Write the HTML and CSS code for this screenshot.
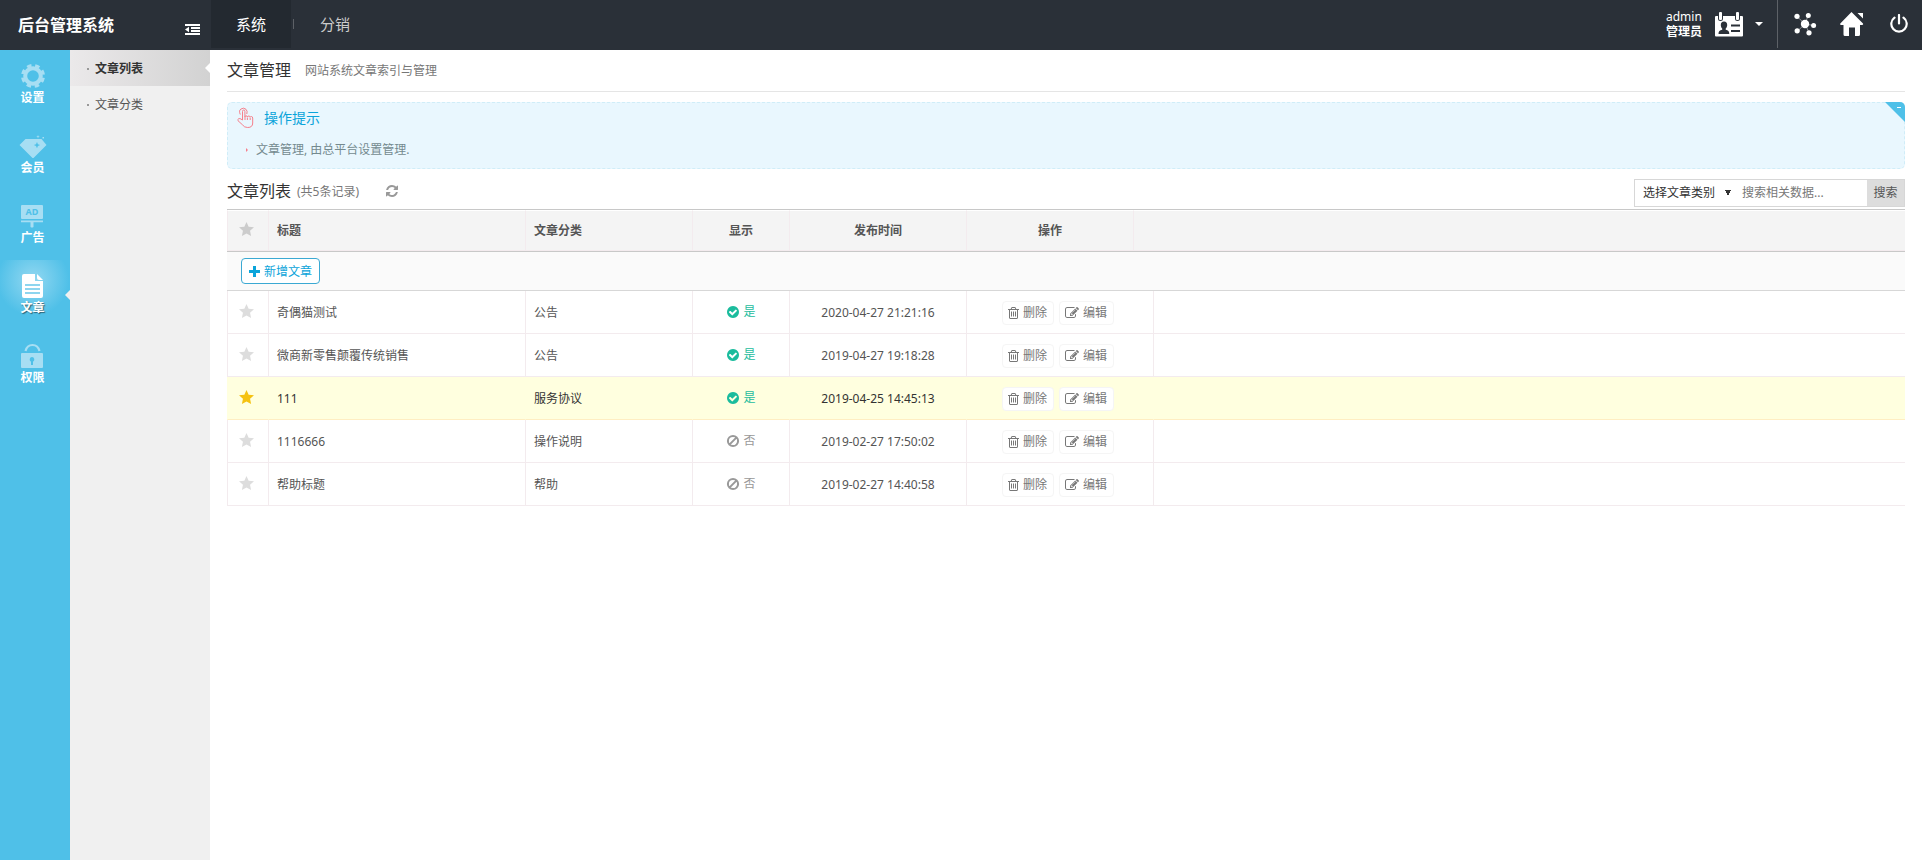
FILE: index.html
```html
<!DOCTYPE html>
<html lang="zh-CN">

<head>
	<meta charset="UTF-8">
	<meta name="viewport" content="width=device-width, initial-scale=1.0">
	<title>后台管理系统</title>

	<link rel="stylesheet" href="styles.css">
</head>

<body>

	<!-- 图标 -->
	<svg class="icon-defs" aria-hidden="true">
		<symbol id="i-star" viewBox="0 0 14 13">
			<path d="M7 0l2 4.300 5 .6-3.700 3.200 1 4.900L7 10.700 2.700 13l1-4.900L0 4.900l5-.6z" />
		</symbol>
		<symbol id="i-trash" viewBox="192 0 1408 1792">
			<path d="M704 736v576q0 14-9 23t-23 9h-64q-14 0-23-9t-9-23v-576q0-14 9-23t23-9h64q14 0 23 9t9 23zm256 0v576q0 14-9 23t-23 9h-64q-14 0-23-9t-9-23v-576q0-14 9-23t23-9h64q14 0 23 9t9 23zm256 0v576q0 14-9 23t-23 9h-64q-14 0-23-9t-9-23v-576q0-14 9-23t23-9h64q14 0 23 9t9 23zm128 724v-948h-896v948q0 22 7 40.500t14.500 27 10.500 8.500h832q3 0 10.500-8.500t14.500-27 7-40.500zm-672-1076h448l-48-117q-7-9-17-11h-317q-10 2-17 11zm928 32v64q0 14-9 23t-23 9h-96v948q0 83-47 143.500t-113 60.500h-832q-66 0-113-58.500t-47-141.500v-952h-96q-14 0-23-9t-9-23v-64q0-14 9-23t23-9h309l70-167q15-37 54-63t79-26h320q40 0 79 26t54 63l70 167h309q14 0 23 9t9 23z" />
		</symbol>
		<symbol id="i-edit" viewBox="0 0 1792 1792">
			<path d="M888 1184l116-116-152-152-116 116v56h96v96h56zm440-720q-16-16-33 1l-350 350q-17 17-1 33t33-1l350-350q17-17 1-33zm80 594v190q0 119-84.500 203.500t-203.500 84.500h-832q-119 0-203.500-84.500t-84.500-203.500v-832q0-119 84.500-203.500t203.500-84.500h832q63 0 117 25 15 7 18 23 3 17-9 29l-49 49q-14 14-32 8-23-6-45-6h-832q-66 0-113 47t-47 113v832q0 66 47 113t113 47h832q66 0 113-47t47-113v-126q0-13 9-22l64-64q15-15 35-7t20 29zm-96-738l288 288-672 672h-288v-288zm444 132l-92 92-288-288 92-92q28-28 68-28t68 28l152 152q28 28 28 68t-28 68z" />
		</symbol>
		<symbol id="i-yes" viewBox="0 0 1792 1792">
			<path d="M1412 734q0-28-18-46l-91-90q-19-19-45-19t-45 19l-408 407-226-226q-19-19-45-19t-45 19l-91 90q-18 18-18 46 0 27 18 45l362 362q19 19 45 19 27 0 46-19l543-543q18-18 18-45zm252 162q0 209-103 385.500t-279.500 279.500-385.500 103-385.500-103-279.500-279.500-103-385.500 103-385.500 279.500-279.500 385.500-103 385.500 103 279.500 279.500 103 385.500z" />
		</symbol>
		<symbol id="i-no" viewBox="0 0 14 14">
			<path d="M7 1.900a5.100 5.100 0 100 10.200A5.100 5.100 0 007 1.900zM10.600 3.400l-7.200 7.200" fill="none" stroke="currentColor" stroke-width="2" />
		</symbol>
	</svg>

	<header class="header">
		<div class="logo">
			<h1>后台管理系统</h1>
			<button type="button" class="fold" aria-label="收起菜单">
				<svg width="15" height="12" viewBox="0 0 15 12">
					<path d="M0 0h15v2H0zM6 3h9v2H6zM6 6h9v2H6zM0 9h15v2H0zM0 5.500L4 2.800v5.400z" />
				</svg>
			</button>
		</div>
		<nav class="tabs">
			<a href="#" class="tab on">系统</a>
			<a href="#" class="tab">分销</a>
		</nav>
		<div class="account">
			<div class="account-name">
				<span>admin</span>
				<strong>管理员</strong>
			</div>
			<svg width="28" height="25" viewBox="0 0 28 25">
				<path fill="#fff" d="M1 4h2v2.500a2.500 2.500 0 005 0V4h12v2.500a2.500 2.500 0 005 0V4h2q1 0 1 1v18.500q0 1-1 1H1q-1 0-1-1V5q0-1 1-1z" />
				<rect x="4" y="0" width="3" height="8" rx="1" fill="#fff" />
				<rect x="21" y="0" width="3" height="8" rx="1" fill="#fff" />
				<path fill="#2a3038" d="M9 9.500c2.200 0 3.200 1.500 3.200 3.500 0 1.600-.7 2.800-1.500 3.500v1.200c2.500.6 3.600 1.500 3.600 4.300H3.500c0-2.800 1.100-3.700 3.700-4.300v-1.200C6.400 15.800 5.800 14.600 5.800 13c0-2 1-3.500 3.200-3.500zM16 12.500h9v2h-9zM16 18h9v2h-9z" />
			</svg>
			<span class="caret"></span>
		</div>
		<div class="tools">
			<button type="button" class="tool" aria-label="站点地图">
				<svg width="24" height="24" viewBox="0 0 24 24">
					<path d="M12 12L4 4.500M12 12l3-8M12 12l8.500 1.500M12 12l4 8.500M12 12l-7.500 7" stroke="#8d9196" />
					<circle cx="12" cy="12" r="4.200" />
					<circle cx="4" cy="4.300" r="2.600" />
					<circle cx="15.300" cy="3.600" r="2.500" />
					<circle cx="20.600" cy="13.500" r="2.500" />
					<circle cx="16" cy="20.800" r="2.600" />
					<circle cx="4.200" cy="18.800" r="2.600" />
				</svg>
			</button>
			<button type="button" class="tool" aria-label="首页">
				<svg width="24" height="24" viewBox="0 0 24 24">
					<path d="M11.500 0L23 11.500q.6 1.500-1 1.500h-2v9.500q0 1.500-1.500 1.500H15v-8.500H9V24H5q-1.500 0-1.500-1.500V13H1.200Q-.4 13 .3 11.500zM17.500 1H23v5.500z" />
				</svg>
			</button>
			<button type="button" class="tool" aria-label="退出">
				<svg width="20" height="20" viewBox="0 0 20 20">
					<path d="M5.500 3.600a7.700 7.700 0 109 0M10 1v8.500" fill="none" stroke="#fff" stroke-width="2.200" stroke-linecap="round" />
				</svg>
			</button>
		</div>
	</header>

	<div class="wrap">

		<nav class="side">
			<a href="#" class="side-item">
				<svg width="28" height="26" viewBox="0 0 28 26">
					<circle cx="14" cy="13" r="7.800" fill="none" stroke="#a7def3" stroke-width="4" />
					<circle cx="14" cy="13" r="10.500" fill="none" stroke="#a7def3" stroke-width="3" stroke-dasharray="4.500 3.747" stroke-dashoffset="-1.870" />
				</svg>
				<span>设置</span>
			</a>
			<a href="#" class="side-item">
				<svg width="28" height="26" viewBox="0 0 28 26">
					<path fill-rule="evenodd" d="M6.500 6h16l5 6L14.500 25h-1L.5 12zM18 9l-1 2.200-2.200.9 2.200.9 1 2.200.9-2.200 2.200-.9-2.200-.9z" />
					<path d="M19 2l.5 1.200 1.300.4-1.300.5L19 5.500l-.5-1.400-1.300-.5 1.300-.4zM23.500 4h1.500v1.500h-1.500z" />
				</svg>
				<span>会员</span>
			</a>
			<a href="#" class="side-item">
				<svg width="28" height="26" viewBox="0 0 28 26">
					<rect x="2" y="2" width="22" height="14" rx="1" />
					<path d="M2 17.500h22v1.800H2zM11.500 19h3v5q-1.500 1-3 0z" />
					<text x="13" y="12" class="ad">AD</text>
				</svg>
				<span>广告</span>
			</a>
			<a href="#" class="side-item on">
				<svg width="28" height="26" viewBox="0 0 28 26">
					<path d="M5 1h11v7h8v15q0 2-2 2H5q-2 0-2-2V3q0-2 2-2z" />
					<path d="M18 1l6 6h-4q-2 0-2-2z" />
					<path d="M6 12h15M6 16h15M6 20h15" stroke="#8dd5ef" stroke-width="2" />
				</svg>
				<span>文章</span>
			</a>
			<a href="#" class="side-item">
				<svg width="28" height="26" viewBox="0 0 28 26">
					<path d="M6.500 8q1.500-6 7-6t7 6" fill="none" stroke="#a7def3" stroke-width="2.200" />
					<path fill-rule="evenodd" d="M3 10h20q1 0 1 1v13q0 1-1 1H3q-1 0-1-1V11q0-1 1-1zM13 14a2.500 2.500 0 00-1 4.700V22h2v-3.300A2.500 2.500 0 0013 14z" />
				</svg>
				<span>权限</span>
			</a>
		</nav>

		<nav class="submenu">
			<a href="#" class="submenu-item on">文章列表</a>
			<a href="#" class="submenu-item">文章分类</a>
		</nav>

		<main class="main">

			<div class="page-title">
				<h2>文章管理</h2>
				<p>网站系统文章索引与管理</p>
			</div>

			<section class="tips">
				<h3>
					<svg width="20" height="22" viewBox="0 0 20 22">
						<path d="M6.500 13V4.500q0-1.500 1.200-1.500t1.200 1.500V10q0-1.200 1.200-1.200t1.300 1.200q.2-1 1.400-1t1.300 1.300q.2-.8 1.300-.8t1.300 1.500v5q0 4.500-5 4.500-3.500 0-5-2.500L2 13.700q-.6-1.500.7-2t2.300.4zM4.300 7.500Q2.500 3.500 5 2q2.700-1.800 5 .3 1.800 1.900.8 4.700M9 10v3M11.400 10.500V13M14.200 11v2" />
					</svg>
					操作提示
				</h3>
				<ul>
					<li>文章管理, 由总平台设置管理.</li>
				</ul>
				<button type="button" class="tips-close" aria-label="收起提示"></button>
			</section>

			<div class="list-head">
				<h3>文章列表</h3>
				<span class="count">(共5条记录)</span>
				<button type="button" class="refresh" aria-label="刷新">
					<svg width="14" height="14" viewBox="0 0 1792 1792">
						<path d="M1639 1056q0 5-1 7-64 268-268 434.500t-478 166.500q-146 0-282.500-55t-243.500-157l-129 129q-19 19-45 19t-45-19-19-45v-448q0-26 19-45t45-19h448q26 0 45 19t19 45-19 45l-137 137q71 66 161 102t187 36q134 0 250-65t186-179q11-17 53-117 8-23 30-23h192q13 0 22.500 9.500t9.500 22.500zm25-800v448q0 26-19 45t-45 19h-448q-26 0-45-19t-19-45 19-45l138-138q-148-137-349-137-134 0-250 65t-186 179q-11 17-53 117-8 23-30 23h-199q-13 0-22.500-9.500t-9.500-22.500v-7q65-268 270-434.500t480-166.500q146 0 284 55.500t245 156.500l130-129q19-19 45-19t45 19 19 45z" />
					</svg>
				</button>
				<form class="search">
					<select aria-label="选择文章类别">
						<option>选择文章类别</option>
						<option>公告</option>
						<option>服务协议</option>
						<option>操作说明</option>
						<option>帮助</option>
					</select>
					<input type="text" placeholder="搜索相关数据..." aria-label="搜索相关数据">
					<button type="button">搜索</button>
				</form>
			</div>

			<table class="list">
				<colgroup>
					<col class="col-star">
					<col class="col-title">
					<col class="col-cate">
					<col class="col-show">
					<col class="col-time">
					<col class="col-handle">
					<col class="col-handle-more">
					<col>
				</colgroup>
				<thead>
					<tr>
						<th><svg class="star"><use href="#i-star" /></svg></th>
						<th>标题</th>
						<th>文章分类</th>
						<th class="center">显示</th>
						<th class="center">发布时间</th>
						<th class="center">操作</th>
						<th colspan="2"></th>
					</tr>
				</thead>
				<tbody>
					<tr class="toolbar">
						<td colspan="8">
							<button type="button" class="add">
								<svg width="11" height="11" viewBox="0 0 11 11"><path d="M4 0h3v4h4v3H7v4H4V7H0V4h4z" /></svg>
								新增文章
							</button>
						</td>
					</tr>
					<tr>
						<td><svg class="star"><use href="#i-star" /></svg></td>
						<td>奇偶猫测试</td>
						<td>公告</td>
						<td class="center"><span class="state yes"><svg><use href="#i-yes" /></svg>是</span></td>
						<td class="center">2020-04-27 21:21:16</td>
						<td class="handle" colspan="2">
							<a href="#" class="btn"><svg class="trash"><use href="#i-trash" /></svg>删除</a>
							<a href="#" class="btn"><svg><use href="#i-edit" /></svg>编辑</a>
						</td>
						<td></td>
					</tr>
					<tr>
						<td><svg class="star"><use href="#i-star" /></svg></td>
						<td>微商新零售颠覆传统销售</td>
						<td>公告</td>
						<td class="center"><span class="state yes"><svg><use href="#i-yes" /></svg>是</span></td>
						<td class="center">2019-04-27 19:18:28</td>
						<td class="handle" colspan="2">
							<a href="#" class="btn"><svg class="trash"><use href="#i-trash" /></svg>删除</a>
							<a href="#" class="btn"><svg><use href="#i-edit" /></svg>编辑</a>
						</td>
						<td></td>
					</tr>
					<tr class="selected">
						<td><svg class="star"><use href="#i-star" /></svg></td>
						<td>111</td>
						<td>服务协议</td>
						<td class="center"><span class="state yes"><svg><use href="#i-yes" /></svg>是</span></td>
						<td class="center">2019-04-25 14:45:13</td>
						<td class="handle" colspan="2">
							<a href="#" class="btn"><svg class="trash"><use href="#i-trash" /></svg>删除</a>
							<a href="#" class="btn"><svg><use href="#i-edit" /></svg>编辑</a>
						</td>
						<td></td>
					</tr>
					<tr>
						<td><svg class="star"><use href="#i-star" /></svg></td>
						<td>1116666</td>
						<td>操作说明</td>
						<td class="center"><span class="state no"><svg><use href="#i-no" /></svg>否</span></td>
						<td class="center">2019-02-27 17:50:02</td>
						<td class="handle" colspan="2">
							<a href="#" class="btn"><svg class="trash"><use href="#i-trash" /></svg>删除</a>
							<a href="#" class="btn"><svg><use href="#i-edit" /></svg>编辑</a>
						</td>
						<td></td>
					</tr>
					<tr>
						<td><svg class="star"><use href="#i-star" /></svg></td>
						<td>帮助标题</td>
						<td>帮助</td>
						<td class="center"><span class="state no"><svg><use href="#i-no" /></svg>否</span></td>
						<td class="center">2019-02-27 14:40:58</td>
						<td class="handle" colspan="2">
							<a href="#" class="btn"><svg class="trash"><use href="#i-trash" /></svg>删除</a>
							<a href="#" class="btn"><svg><use href="#i-edit" /></svg>编辑</a>
						</td>
						<td></td>
					</tr>
				</tbody>
			</table>

		</main>
	</div>

</body>

</html>
```
FILE: styles.css
```css
* {
	padding: 0;
	margin: 0;
	box-sizing: border-box;
}

body {
	display: flex;
	flex-direction: column;
	min-height: 100vh;
	font: 12px/20px "Noto Sans", "Noto Sans CJK SC", sans-serif;
	color: #555;
	background: #fff;
}

ul {
	list-style: none;
}

a {
	color: inherit;
	text-decoration: none;
}

button,
input,
select {
	font: inherit;
	color: inherit;
	border: 0;
	background: none;
}

button {
	cursor: pointer;
}

svg {
	display: block;
	fill: currentColor;
}

.icon-defs {
	position: absolute;
	width: 0;
	height: 0;
}

/* 顶部 */

.header {
	display: flex;
	height: 50px;
	color: #fff;
	background: #2a3038;
}

.logo {
	display: flex;
	justify-content: space-between;
	align-items: center;
	width: 211px;
	padding: 0 11px 0 18px;
}

.logo h1 {
	font-size: 16px;
	font-weight: bold;
}

.fold {
	padding-top: 9px;
	color: #fff;
}

.tabs {
	display: flex;
	height: 48px;
	line-height: 48px;
	font-size: 15px;
}

.tab {
	display: flex;
	align-items: center;
	width: 82px;
	color: #ccc;
	justify-content: center;
}

.tab.on {
	width: 80px;
	color: #fff;
	background: #232930;
}

.tab.on + .tab::before {
	content: "";
	width: 1px;
	height: 10px;
	margin-right: 26px;
	background: #5d6167;
}

.tab.on + .tab {
	justify-content: flex-start;
	padding-left: 2px;
}

.account {
	display: flex;
	align-items: center;
	height: 48px;
	margin-left: auto;
	padding-right: 14px;
	border-right: 1px solid #5d6167;
}

.account-name {
	margin-right: 13px;
	line-height: 15px;
}

.account-name span,
.account-name strong {
	display: block;
}

.caret {
	margin-left: 12px;
	border: 4px solid transparent;
	border-top-color: #fff;
	border-bottom: 0;
}

.tools {
	display: flex;
	height: 48px;
	padding-left: 3px;
}

.tool {
	display: flex;
	justify-content: center;
	align-items: center;
	width: 47px;
	color: #fff;
}

/* 左侧菜单 */

.wrap {
	display: flex;
	flex: 1;
}

.side {
	width: 70px;
	background: #4fc0e8;
}

.side-item {
	position: relative;
	display: flex;
	flex-direction: column;
	align-items: center;
	height: 70px;
	padding: 13px 5px 0 0;
	color: #a7def3;
}

.side-item span {
	font-weight: bold;
	line-height: 18px;
	color: #fff;
}

.side-item.on {
	color: #fff;
	background: radial-gradient(circle at 33px 20px, #93d8f1, #4fc0e8 36px);
}

.side-item.on span {
	text-shadow: 1px 1px 1px rgba(0, 0, 0, .5);
}

.side-item.on::after {
	content: "";
	position: absolute;
	top: 30px;
	right: 0;
	border: 5px solid transparent;
	border-right-color: #f0f0f0;
	border-left: 0;
}

.ad {
	font: bold 9px "Noto Sans", sans-serif;
	text-anchor: middle;
	fill: #4fc0e8;
}

.submenu {
	width: 140px;
	background: #f0f0f0;
}

.submenu-item {
	position: relative;
	display: flex;
	align-items: center;
	height: 36px;
	padding: 2px 0 0 17px;
}

.submenu-item::before {
	content: "";
	width: 2px;
	height: 2px;
	margin-right: 6px;
	background: #999;
}

.submenu-item.on {
	font-weight: bold;
	color: #333;
	background: linear-gradient(to right, #ebe9ea, #d2d2d2);
}

.submenu-item.on::after {
	content: "";
	position: absolute;
	top: 13px;
	right: 0;
	border: 5px solid transparent;
	border-right-color: #fff;
	border-left: 0;
}

/* 内容 */

.main {
	flex: 1;
	padding: 0 17px;
}

.page-title {
	display: flex;
	align-items: center;
	height: 42px;
	border-bottom: 1px solid #e5e5e5;
}

.page-title h2,
.list-head h3 {
	font-size: 16px;
	font-weight: normal;
	color: #333;
}

.page-title h2 {
	padding-bottom: 2px;
}

.page-title p {
	margin-left: 14px;
	color: #777;
}

.tips {
	position: relative;
	height: 67px;
	margin-top: 10px;
	padding: 4px 8px;
	border: 1px dashed #d0edf8;
	border-radius: 5px;
	background: #e9f7fe;
}

.tips h3 {
	display: flex;
	align-items: center;
	gap: 8px;
	height: 22px;
	font-size: 14px;
	font-weight: normal;
	color: #0ba4da;
}

.tips h3 svg {
	fill: none;
	stroke: #f67f8b;
}

.tips li {
	display: flex;
	align-items: center;
	margin-top: 11px;
	padding-left: 10px;
	color: #748a8f;
}

.tips li::before {
	content: "";
	margin-right: 8px;
	border: 2px solid transparent;
	border-left-color: #f67f8b;
	border-right: 0;
}

.tips-close {
	position: absolute;
	top: -1px;
	right: -1px;
	width: 20px;
	height: 20px;
	border-top-right-radius: 5px;
	background: #4fc0e8;
	clip-path: polygon(0 0, 100% 0, 100% 100%);
}

.tips-close::before {
	content: "";
	position: absolute;
	top: 5px;
	right: 4px;
	width: 4px;
	height: 1px;
	background: #fff;
}

.list-head {
	display: flex;
	align-items: center;
	height: 40px;
	padding-top: 4px;
}

.count {
	margin-left: 6px;
	padding-top: 2px;
	color: #777;
}

.refresh {
	margin-left: 26px;
	color: #999;
}

.search {
	display: flex;
	width: 271px;
	height: 28px;
	margin: 4px 0 0 auto;
	border: 1px solid #d7d7d7;
}

.search select {
	width: 99px;
	padding-left: 8px;
	appearance: none;
	color: #333;
	background: linear-gradient(to bottom right, #333 50%, transparent 50%) 93px 10px / 3px 6px no-repeat,
		linear-gradient(to bottom left, #333 50%, transparent 50%) 90px 10px / 3px 6px no-repeat;
}

.search input {
	flex: 1;
	min-width: 0;
	padding-left: 8px;
}

.search input::placeholder {
	color: #777;
}

.search button {
	width: 37px;
	background: #ddd;
}

/* 列表 */

.list {
	width: 100%;
	table-layout: fixed;
	border-collapse: separate;
	border-spacing: 0;
	border-top: 1px solid #c8c8c8;
}

.col-star {
	width: 42px;
}

.col-title {
	width: 257px;
}

.col-cate {
	width: 167px;
}

.col-show {
	width: 97px;
}

.col-time {
	width: 177px;
}

.col-handle {
	width: 167px;
}

.col-handle-more {
	width: 20px;
}

.list th,
.list td {
	height: 43px;
	padding: 2px 8px 0;
	border-right: 1px solid #f3ebee;
	border-bottom: 1px solid #f3ebee;
	text-align: left;
}

.list th {
	height: 41px;
	padding-top: 0;
	border-top: 1px solid #fff;
	background: #f4f4f4;
}

.list th:first-child,
.list td:first-child {
	padding-left: 11px;
	border-left: 1px solid #f3ebee;
}

.list th:last-child,
.list td:last-child {
	border-right: 0;
}

.list .center,
.list .handle {
	text-align: center;
}

.list .handle {
	padding-right: 12px;
}

.list .toolbar td {
	height: 40px;
	padding: 0 14px;
	border: 0;
	border-top: 1px solid #c8c8c8;
	border-bottom: 1px solid #d7d7d7;
	background: #fafafa;
}

.list .selected td {
	color: #333;
	border-color: transparent;
	border-bottom-color: #ffeec2;
	background: #ffffdf;
}

.star {
	width: 15px;
	height: 14px;
	margin-bottom: 5px;
	color: #ddd;
}

th .star {
	margin-bottom: 3px;
	color: #ccc;
}

.selected .star {
	color: #f5c211;
}

.add {
	display: flex;
	align-items: center;
	gap: 4px;
	height: 26px;
	padding: 1px 7px 0;
	color: #0ba4da;
	border: 1px solid #3ba9d3;
	border-radius: 4px;
	background: #fff;
}

.state {
	display: inline-flex;
	align-items: center;
	gap: 3px;
}

.state svg,
.btn svg {
	width: 14px;
	height: 14px;
}

.btn .trash {
	width: 11px;
}

.yes {
	color: #1bbc9d;
}

.no {
	color: #999;
}

.btn {
	display: inline-flex;
	align-items: center;
	gap: 4px;
	height: 24px;
	margin: 0 1px;
	padding: 0 6px 0 5px;
	color: #777;
	border: 1px solid #f5f5f5;
	border-radius: 4px;
	background: #fff;
}
```
